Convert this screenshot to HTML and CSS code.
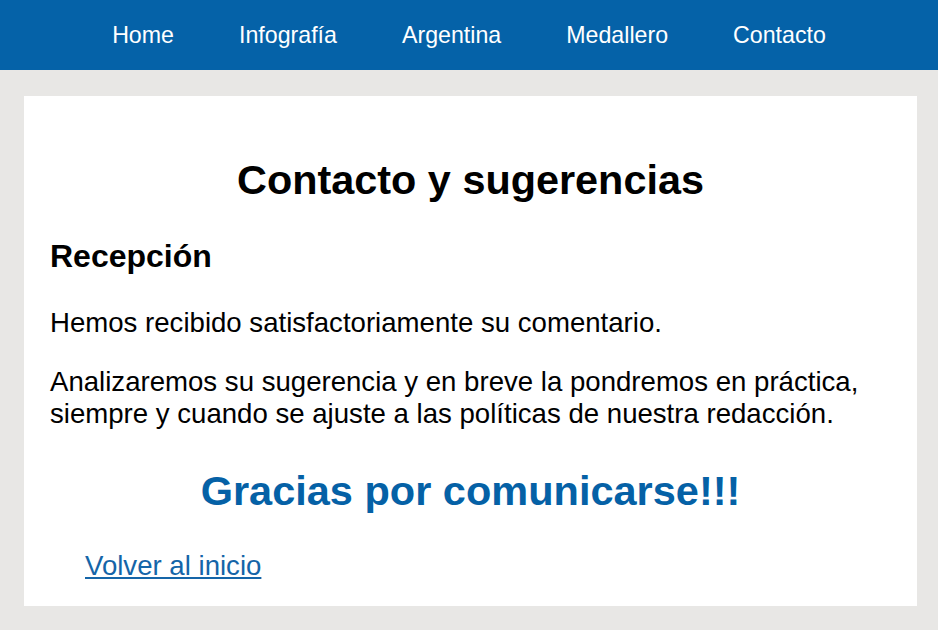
FILE: index.html
```html
<!DOCTYPE html>
<html lang="es">
<head>
<meta charset="utf-8">
<title>Contacto y sugerencias</title>
<link rel="stylesheet" href="styles.css">
</head>
<body>
<nav class="topnav">
  <a class="nav-link" href="#">Home</a>
  <a class="nav-link" href="#">Infografía</a>
  <a class="nav-link" href="#">Argentina</a>
  <a class="nav-link" href="#">Medallero</a>
  <a class="nav-link" href="#">Contacto</a>
</nav>
<main class="card">
  <h1 class="title">Contacto y sugerencias</h1>
  <h2 class="subtitle">Recepción</h2>
  <p class="text">Hemos recibido satisfactoriamente su comentario.</p>
  <p class="text">Analizaremos su sugerencia y en breve la pondremos en práctica, siempre y cuando se ajuste a las políticas de nuestra redacción.</p>
  <h1 class="thanks">Gracias por comunicarse!!!</h1>
  <a class="back" href="#">Volver al inicio</a>
</main>
</body>
</html>
```
FILE: styles.css
```css
html, body {
  margin: 0;
  padding: 0;
}
body {
  background: #e8e7e5;
  font-family: "Liberation Sans", Arial, sans-serif;
  color: #000;
  height: 630px;
  overflow: hidden;
}
.topnav {
  height: 70px;
  background: #0562a8;
  display: flex;
  justify-content: center;
  align-items: center;
  gap: 65px;
}
.nav-link {
  color: #fff;
  font-size: 23.2px;
  line-height: 26px;
  text-decoration: none;
}
.card {
  background: #fff;
  margin: 26px 21px 0 24px;
  padding: 61px 26px 25px 26px;
  display: flex;
  flex-direction: column;
  align-items: flex-start;
}
.title {
  align-self: stretch;
  text-align: center;
  font-size: 41.4px;
  line-height: 47px;
  font-weight: bold;
  margin: 0;
}
.subtitle {
  font-size: 32px;
  line-height: 37px;
  font-weight: bold;
  margin: 34px 0 0 0;
}
.text {
  font-size: 27.6px;
  line-height: 32px;
  margin: 32px 0 0 0;
}
.text + .text {
  margin-top: 27px;
}
.thanks {
  align-self: stretch;
  text-align: center;
  color: #0561a6;
  font-size: 41.5px;
  line-height: 47px;
  font-weight: bold;
  margin: 37px 0 0 0;
}
.back {
  margin: 36px 0 0 35px;
  font-size: 27.6px;
  line-height: 31px;
  color: #1565a8;
  text-decoration: underline;
}
```
